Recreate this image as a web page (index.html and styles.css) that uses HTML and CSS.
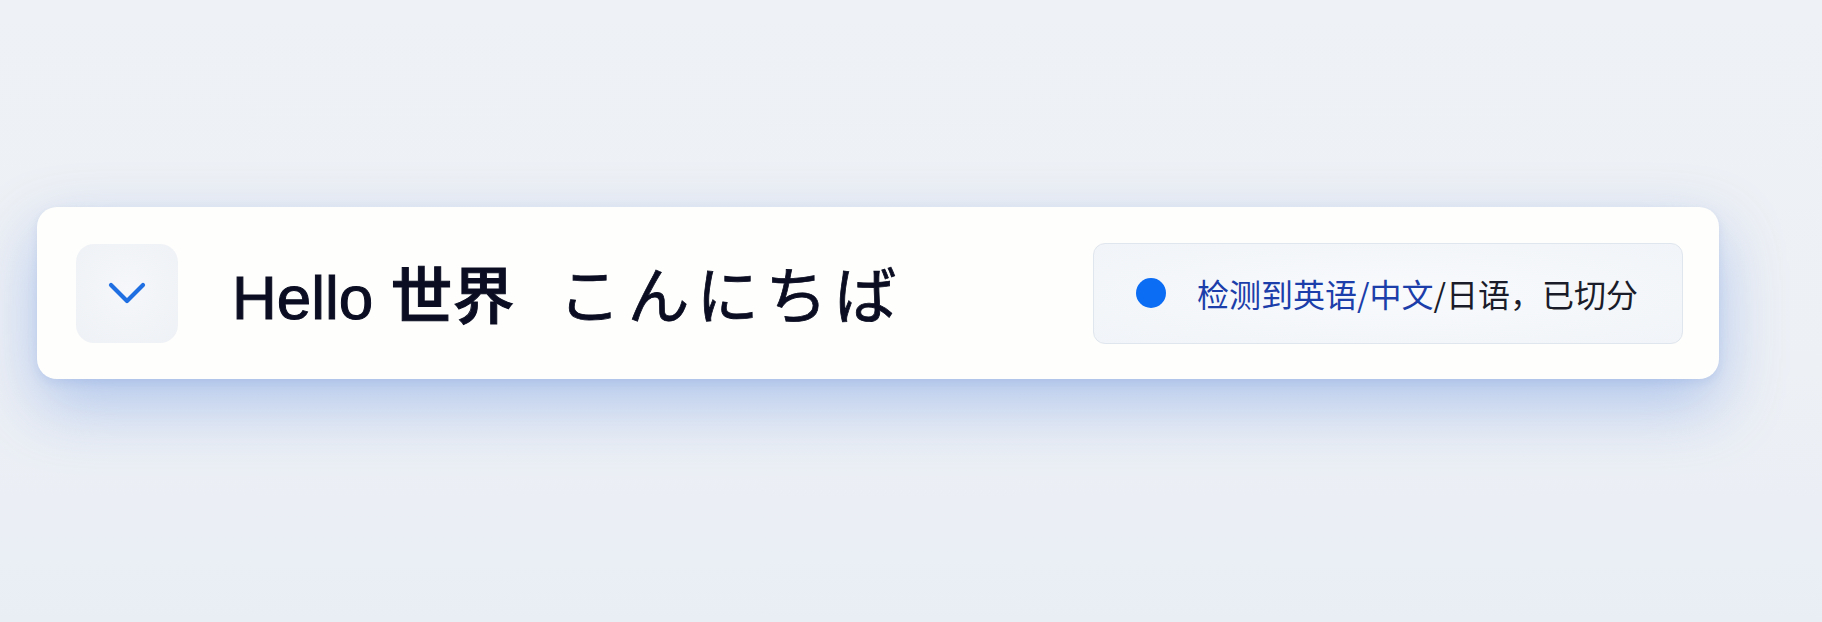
FILE: index.html
```html
<!DOCTYPE html>
<html lang="zh">
<head>
    <meta charset="UTF-8" />
    <meta name="viewport" content="width=device-width, initial-scale=1.0" />
    <title>Language Split</title>
    <link rel="stylesheet" href="styles.css">
</head>
<body>
    <div class="stage">
        <div class="bar">
            <button class="toggle" aria-label="展开">
                <svg width="38" height="23" viewBox="0 0 38 23">
                    <polyline points="3,3 19,19 35,3" fill="none" stroke="#1f6fe3" stroke-width="4.2" stroke-linecap="round" stroke-linejoin="round" />
                </svg>
            </button>
            <div class="phrase">
                <span class="latin">Hello 世界</span><span class="kana">こんにちば</span>
            </div>
            <div class="detect">
                <span class="dot"></span>
                <span class="detect-text"><span class="hl">检测到英语/中文</span>/日语，已切分</span>
            </div>
        </div>
    </div>
</body>
</html>
```

FILE: styles.css
```css
body {
    margin: 0;
    height: 622px;
    overflow: hidden;
    background: linear-gradient(180deg, #eef1f5 0%, #edf0f5 60%, #e9eef5 100%);
    font-family: "Liberation Sans", "Noto Sans CJK SC", sans-serif;
}
.stage {
    padding: 207px 0 0 37px;
}
.bar {
    width: 1682px;
    height: 172px;
    box-sizing: border-box;
    padding: 0 36px 0 39px;
    display: flex;
    align-items: center;
    background: #fefefc;
    border-radius: 20px;
    box-shadow: 0 26px 64px rgba(100, 145, 225, 0.45), 0 4px 10px rgba(120, 150, 210, 0.18);
}
.toggle {
    width: 102px;
    height: 99px;
    border: none;
    border-radius: 18px;
    background: radial-gradient(circle at 50% 45%, #f5f7fa 0%, #eef1f5 100%);
    display: flex;
    align-items: center;
    justify-content: center;
    padding: 0;
    margin: 0;
    flex-shrink: 0;
}
.phrase {
    margin-left: 54px;
    font-size: 62px;
    color: #0b0e22;
    white-space: nowrap;
    margin-bottom: 2px;
}
.latin {
    font-weight: 500;
    -webkit-text-stroke: 1px #0b0e22;
}
.kana {
    font-family: "Noto Sans CJK JP", sans-serif;
    -webkit-text-stroke: 0.8px #0b0e22;
    margin-left: 44px;
    letter-spacing: 7px;
}
.detect {
    margin-left: auto;
    height: 101px;
    box-sizing: border-box;
    padding: 0 44px 0 42px;
    display: flex;
    align-items: center;
    gap: 31px;
    background: radial-gradient(ellipse at 50% 50%, #f8fafc 0%, #f1f4f8 100%);
    border: 1px solid #e0e6ee;
    border-radius: 12px;
}
.dot {
    width: 30px;
    height: 30px;
    border-radius: 50%;
    background: #0b6cf4;
    flex-shrink: 0;
}
.detect-text {
    font-family: "Noto Sans CJK SC", sans-serif;
    font-size: 32px;
    color: #1a1c2a;
    white-space: nowrap;
}
.hl {
    color: #1c3eaa;
}
```
